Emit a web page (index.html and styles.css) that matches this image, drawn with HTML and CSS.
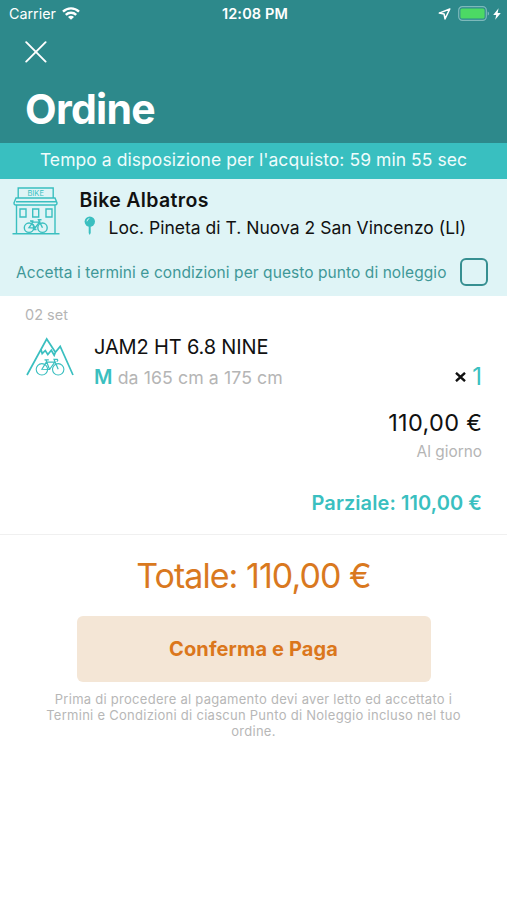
FILE: index.html
```html
<!DOCTYPE html>
<html lang="it">
<head>
<meta charset="utf-8">
<meta name="viewport" content="width=device-width, initial-scale=1">
<title>Ordine</title>
<link rel="stylesheet" href="styles.css">
</head>
<body>
<header class="header">
  <div class="status">
    <div class="status-left">
      <span class="carrier">Carrier</span>
      <svg class="wifi" width="18" height="13" viewBox="0 0 18 13" fill="none" stroke="#fff" stroke-width="2.4"><path d="M1 4.6a11.5 11.5 0 0 1 16 0M3.8 7.9a7.4 7.4 0 0 1 10.4 0"/><path d="M9 12.8L6 9.9a4.2 4.2 0 0 1 6 0z" fill="#fff" stroke="none"/></svg>
    </div>
    <span class="clock">12:08 PM</span>
    <div class="status-right">
      <svg width="13" height="12" viewBox="0 0 13 12" fill="none" stroke="#fff" stroke-width="1.5" stroke-linejoin="round"><path d="M11.8 1L1.2 5.1l4.9.9.9 4.9z"/></svg>
      <svg class="battery" width="32" height="15" viewBox="0 0 32 15"><rect x=".7" y=".7" width="27.6" height="13.6" rx="3.6" fill="none" stroke="#7db9bb" stroke-width="1.2"/><rect x="2.4" y="2.4" width="24.2" height="10.2" rx="1.6" fill="#4cd964"/><path d="M29.7 5.4c1.8.6 1.8 3.6 0 4.2z" fill="#7db9bb"/></svg>
      <svg width="8" height="12" viewBox="0 0 8 12"><path d="M5.6.2L.2 6.9h3L2.2 11.8 7.8 4.9H4.6z" fill="#fff"/></svg>
    </div>
  </div>
  <svg class="close" width="22" height="22" viewBox="0 0 22 22" fill="none" stroke="#fff" stroke-width="1.9" stroke-linecap="round"><path d="M1.2 1.2l19.4 19.4M20.6 1.2L1.2 20.6"/></svg>
  <h1 class="title">Ordine</h1>
</header>
<div class="timer"><span>Tempo a disposizione per l'acquisto: 59 min 55 sec</span></div>
<section class="shop">
  <div class="shop-row">
    <svg class="shop-icon" width="48" height="48" viewBox="0 0 48 48" fill="none" stroke="#3abfc0" stroke-width="1.4">
      <path d="M6.2 11V1h35v10M5 11h38l2 5q0 2-2 2H4q-2 0-2-2l2-5zM4.5 18v28.5M43 18v28.5M.5 46.8h47M4 14.8h40"/>
      <path d="M8 22h6v8H8zM20.7 22h6v8h-6zM34 22h6v8h-6z"/>
      <circle cx="17" cy="40.7" r="4.7"/><circle cx="30.5" cy="40.7" r="4.7"/>
      <path d="M17 40.7l4-5.6h6.5L23 41zM19.4 34l3.6 7M30.5 40.7l-4-8h3M18 34h3.5M21.5 42.5h3"/>
      <text x="23.7" y="8.7" class="shop-sign">BIKE</text>
    </svg>
    <div class="shop-info">
      <h2 class="shop-name">Bike Albatros</h2>
      <div class="address-row">
        <svg class="pin" width="12" height="20" viewBox="0 0 12 20"><path d="M4.7 9h2v8l-1 2-1-2z" fill="#3abfc0"/><circle cx="5.8" cy="5.6" r="5.2" fill="#3abfc0"/><path d="M3 5.3q.2-2.3 2.3-2.7" fill="none" stroke="#dff4f6" stroke-width="1"/></svg>
        <span class="address">Loc. Pineta di T. Nuova 2 San Vincenzo (LI)</span>
      </div>
    </div>
  </div>
  <label class="terms"><span class="terms-text">Accetta i termini e condizioni per questo punto di noleggio</span><span class="checkbox"></span></label>
</section>
<main class="order">
  <div class="date">02 set</div>
  <div class="item">
    <svg class="mountain" width="48" height="40" viewBox="0 0 48 40" fill="none" stroke="#3abfc0">
      <path d="M1 38L20.7 2l8.7 13.3L34.2 9.4 47 38M15 12.6l1.2 4 3.1-3.1 2.5 4 3.5-4.2 2.9 5 1.2-3" stroke-width="1.7"/>
      <circle cx="15.9" cy="32.3" r="5.7" stroke-width="1.1"/><circle cx="32.2" cy="32.3" r="5.7" stroke-width="1.1"/>
      <path d="M15.9 32.3l4.4-7.2h8.5l-5.3 7.4zM18.5 22.8h4.3M20 23l3.5 9.5h-7.6M32.2 32.3l-4.2-10h3.3q1.2 1.5-.7 2.2" stroke-width="1.2"/>
    </svg>
    <div class="item-info">
      <div class="item-name">JAM2 HT 6.8 NINE</div>
      <div class="size-row">
        <span class="size"><b>M</b> da 165 cm a 175 cm</span>
        <span class="quantity"><svg width="11" height="10" viewBox="0 0 11 10" stroke="#111" stroke-width="2.4"><path d="M1 .8l9 8.4M10 .8L1 9.2"/></svg><span class="count">1</span></span>
      </div>
    </div>
  </div>
  <div class="price"><span>110,00 €</span></div>
  <div class="per-day"><span>Al giorno</span></div>
  <div class="partial"><span>Parziale: 110,00 €</span></div>
</main>
<footer class="checkout">
  <div class="total"><span>Totale: 110,00 €</span></div>
  <button class="pay"><span>Conferma e Paga</span></button>
  <p class="note">Prima di procedere al pagamento devi aver letto ed accettato i<br>Termini e Condizioni di ciascun Punto di Noleggio incluso nel tuo<br>ordine.</p>
</footer>
</body>
</html>
```
FILE: styles.css
```css
* { box-sizing: border-box; }
body {
  margin: 0;
  min-height: 900px;
  background: #fff;
  color: #111;
  font-family: Inter, "Liberation Sans", sans-serif;
  white-space: nowrap;
}
h1, h2, p { margin: 0; }
svg { display: block; flex: none; }
.header { height: 143px; background: #2d898b; color: #fff; }
.status {
  display: grid;
  grid-template-columns: 1fr auto 1fr;
  align-items: center;
  height: 27px;
  padding: 0 6px 0 9px;
}
.status-left, .status-right { display: flex; align-items: center; }
.status-right { justify-content: flex-end; gap: 7px; }
.status-right .battery { margin-right: -4px; }
.carrier { font-size: 14.3px; }
.wifi { margin-left: 6px; }
.clock { font-size: 14.5px; font-weight: 600; letter-spacing: 0.15px; }
.close { margin: 14px 0 0 25px; }
.title { margin: 21px 0 0 25px; font-size: 41px; line-height: 50px; font-weight: 700; letter-spacing: -0.7px; }
.timer {
  height: 36px;
  background: #39bfc0;
  color: #effcfc;
  font-size: 17.5px;
  letter-spacing: 0.06px;
  line-height: 34px;
  text-align: center;
}
.shop { height: 117px; background: #dff4f6; }
.shop-row { display: flex; padding: 8px 0 0 11.5px; height: 72px; }
.shop-sign { fill: #3abfc0; stroke: none; font-size: 7.5px; text-anchor: middle; }
.shop-info { margin-left: 20px; }
.shop-name { font-size: 19.5px; line-height: 26px; font-weight: 600; letter-spacing: 0.35px; }
.address-row { display: flex; align-items: center; height: 30px; padding-left: 4px; margin-top: -1px; }
.pin { margin-top: -3px; }
.address { margin-left: 13px; font-size: 17.5px; letter-spacing: 0.02px; }
.terms { display: flex; align-items: center; justify-content: space-between; height: 42px; padding: 0 19px 0 16px; }
.terms-text { color: #3f9898; font-size: 15.5px; letter-spacing: 0.07px; }
.checkbox { width: 28px; height: 28px; border: 2px solid #368f91; border-radius: 6px; }
.order { height: 239px; padding: 9px 25px 0; border-bottom: 1px solid #f0f0f0; }
.date { color: #b5b5b5; font-size: 14.5px; line-height: 20px; }
.item { display: flex; height: 78px; padding-top: 9px; }
.mountain { margin: 3px 0 0 1px; }
.item-info { flex: 1; margin-left: 20px; }
.item-name { font-size: 20px; line-height: 26px; letter-spacing: -0.15px; }
.size-row { display: flex; justify-content: space-between; align-items: center; height: 33px; }
.size { color: #b5b5b5; font-size: 17.7px; letter-spacing: 0.1px; }
.size b { color: #3abfc0; font-size: 20px; font-weight: 600; }
.quantity { display: flex; align-items: center; gap: 6px; color: #3abfc0; font-size: 24px; }
.price { font-size: 23.5px; line-height: 30px; text-align: right; letter-spacing: 0.35px; margin: 5px -0.4px 0 0; }
.per-day { color: #b5b5b5; font-size: 15.4px; line-height: 20px; text-align: right; margin-top: 4px; }
.partial { color: #3abfc0; font-size: 20px; font-weight: 600; line-height: 26px; letter-spacing: 0.08px; text-align: right; margin-top: 28px; }
.checkout { text-align: center; }
.total { color: #d9791f; font-size: 34px; line-height: 44px; padding-top: 19px; height: 81px; letter-spacing: -0.95px; }
.pay {
  display: block;
  width: 354px;
  height: 66px;
  margin: 0 auto;
  border: 0;
  border-radius: 6px;
  background: #f4e6d6;
  color: #db771c;
  font: 700 20px/66px Inter, sans-serif;
  letter-spacing: 0.13px;
  padding: 0;
}
.note { margin-top: 9px; color: #b7b7b7; font-size: 13px; line-height: 16px; letter-spacing: 0.27px; }
```
